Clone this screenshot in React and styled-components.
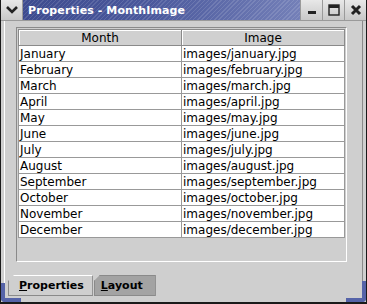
import React from 'react';
import styled, { createGlobalStyle } from 'styled-components';

const GlobalStyles = createGlobalStyle`
  html, body {
    margin: 0;
    padding: 0;
    background: #ffffff;
  }
`;

const months = [
  'January', 'February', 'March', 'April', 'May', 'June', 'July',
  'August', 'September', 'October', 'November', 'December',
];

const App = () => {
  return (
    <>
      <GlobalStyles />
      <Frame>
        <TitleBar>
          <MenuButton>
            <svg width="12" height="8" viewBox="0 0 12 8">
              <path d="M1 1 L6 6 L11 1" stroke="#222" strokeWidth="2.6" fill="none" />
            </svg>
          </MenuButton>
          <TitleStrip>
            <TitleText>Properties - MonthImage</TitleText>
          </TitleStrip>
          <WinButton>
            <svg width="10" height="10" viewBox="0 0 10 10">
              <rect x="1" y="6" width="8" height="3" fill="#222" />
            </svg>
          </WinButton>
          <WinButton>
            <svg width="12" height="12" viewBox="0 0 12 12">
              <rect x="1" y="1" width="10" height="10" fill="none" stroke="#222" strokeWidth="1.4" />
              <rect x="1" y="1" width="10" height="3" fill="#222" />
            </svg>
          </WinButton>
          <WinButton>
            <svg width="12" height="12" viewBox="0 0 12 12">
              <path d="M2 2 L10 10 M10 2 L2 10" stroke="#222" strokeWidth="3" />
            </svg>
          </WinButton>
        </TitleBar>
        <Body>
          <TablePanel>
            <Table>
              <thead>
                <tr>
                  <HeadCell>Month</HeadCell>
                  <HeadCell>Image</HeadCell>
                </tr>
              </thead>
              <tbody>
                {months.map((m) => (
                  <tr key={m}>
                    <Cell>{m}</Cell>
                    <Cell>images/{m.toLowerCase()}.jpg</Cell>
                  </tr>
                ))}
              </tbody>
            </Table>
          </TablePanel>
          <TabStrip>
            <Tab $active>
              <u>P</u>roperties
            </Tab>
            <Tab>
              <u>L</u>ayout
            </Tab>
          </TabStrip>
        </Body>
        <CornerLeft />
        <CornerRight />
      </Frame>
    </>
  );
};

const Frame = styled.div`
  position: relative;
  width: 367px;
  height: 304px;
  box-sizing: border-box;
  background: #cfcfcf;
  border-left: 1px solid #1a1a1a;
  border-right: 1px solid #1a1a1a;
  border-bottom: 2px solid #1a1a1a;
  display: flex;
  flex-direction: column;
  font-family: 'DejaVu Sans', Verdana, sans-serif;
  overflow: hidden;
`;

const TitleBar = styled.div`
  height: 20px;
  display: flex;
  background: #d0d0d0;
  border-bottom: 1px solid #9a9a9a;
`;

const MenuButton = styled.div`
  width: 21px;
  display: flex;
  align-items: center;
  justify-content: center;
  background: linear-gradient(#e8e8e8, #c8c8c8);
  border-right: 1px solid #9a9a9a;
`;

const TitleStrip = styled.div`
  flex: 1;
  display: flex;
  align-items: center;
  padding-left: 5px;
  background:
    repeating-linear-gradient(135deg, rgba(255,255,255,0) 0 2px, rgba(255,255,255,0.12) 2px 3px),
    linear-gradient(90deg, #3d4b8f 0%, #4a589c 45%, #7480b8 100%);
`;

const TitleText = styled.span`
  color: #ffffff;
  font-weight: bold;
  font-size: 11px;
  letter-spacing: 0.1px;
`;

const WinButton = styled.div`
  width: 21px;
  display: flex;
  align-items: center;
  justify-content: center;
  background: linear-gradient(#e8e8e8, #c8c8c8);
  border-left: 1px solid #9a9a9a;
`;

const Body = styled.div`
  flex: 1;
  display: flex;
  flex-direction: column;
  margin: 0 3px 3px 3px;
  border-left: 1px solid #ffffff;
  border-right: 1px solid #8a8a8a;
  padding: 6px 15px 0 11px;
`;

const TablePanel = styled.div`
  height: 235px;
  box-sizing: border-box;
  border: 1px solid #8a8a8a;
  border-right-color: #ffffff;
  border-bottom-color: #ffffff;
  padding: 1px;
  background: #cfcfcf;
`;

const Table = styled.table`
  width: 100%;
  table-layout: fixed;
  border-collapse: collapse;
  font-size: 12px;
  color: #000000;
`;

const HeadCell = styled.th`
  height: 15px;
  padding: 0;
  font-weight: normal;
  text-align: center;
  background: #d0d0d0;
  border: 1px solid #8a8a8a;
  box-shadow: inset 1px 1px 0 #ffffff;
`;

const Cell = styled.td`
  height: 15px;
  padding: 0 0 0 1px;
  background: #ffffff;
  border: 1px solid #999999;
  white-space: nowrap;
  overflow: hidden;
`;

const TabStrip = styled.div`
  margin-top: 13px;
  display: flex;
  align-items: flex-end;
  margin-left: -8px;
`;

const Tab = styled.div`
  height: 19px;
  display: flex;
  align-items: center;
  font-size: 11px;
  font-weight: bold;
  color: #000;
  padding: 0 ${(p) => (p.$active ? '8px 0 10px' : '12px 0 6px')};
  background: ${(p) => (p.$active ? '#cfcfcf' : '#a3a3a3')};
  border: 1px solid #8a8a8a;
  border-top-color: ${(p) => (p.$active ? '#ffffff' : '#8a8a8a')};
  margin-right: 1px;
  clip-path: polygon(6px 0, 100% 0, 100% 100%, 0 100%, 0 6px);
`;

const CornerLeft = styled.div`
  position: absolute;
  left: 0;
  bottom: 0;
  width: 20px;
  height: 19px;
  border-left: 4px solid #5563a8;
  border-bottom: 4px solid #5563a8;
  box-sizing: border-box;
  border-bottom-left-radius: 4px;
`;

const CornerRight = styled.div`
  position: absolute;
  right: 0;
  bottom: 0;
  width: 20px;
  height: 21px;
  border-right: 4px solid #5563a8;
  border-bottom: 4px solid #5563a8;
  box-sizing: border-box;
  border-bottom-right-radius: 4px;
`;

export default App;
